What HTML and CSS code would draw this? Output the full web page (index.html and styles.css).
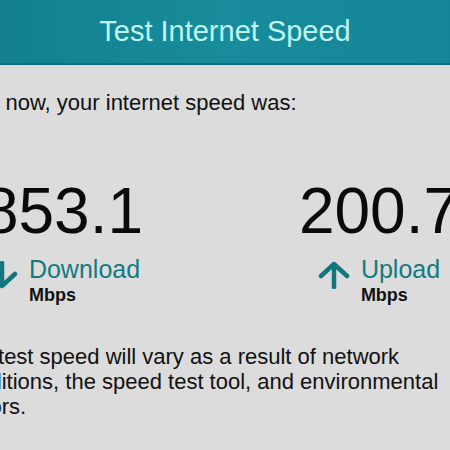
FILE: index.html
```html
<!DOCTYPE html>
<html lang="en">
<head>
    <meta charset="UTF-8">
    <meta name="viewport" content="width=device-width, initial-scale=1.0">
    <title>Test Internet Speed</title>
    <link rel="stylesheet" href="styles.css">
</head>
<body>
    <header class="topbar">
        <h1>Test Internet Speed</h1>
    </header>
    <main class="content">
        <p class="intro">Just now, your internet speed was:</p>

        <div class="results">
            <div class="result">
                <div class="value">853.1</div>
                <div class="meta">
                    <svg class="arrow" viewBox="0 0 32 28" width="32" height="28">
                        <path d="M16 2 V25 M3 13 L16 25 L29 13" />
                    </svg>
                    <div>
                        <div class="label">Download</div>
                        <div class="unit">Mbps</div>
                    </div>
                </div>
            </div>
            <div class="result">
                <div class="value">200.7</div>
                <div class="meta">
                    <svg class="arrow" viewBox="0 0 32 28" width="32" height="28">
                        <path d="M16 26 V3 M3 15 L16 3 L29 15" />
                    </svg>
                    <div>
                        <div class="label">Upload</div>
                        <div class="unit">Mbps</div>
                    </div>
                </div>
            </div>
        </div>

        <p class="note">The test speed will vary as a result of network conditions, the speed test tool, and environmental factors.</p>
    </main>
</body>
</html>
```

FILE: styles.css
```css
body {
    font-family: "Liberation Sans", Arial, sans-serif;
    margin: 0;
    padding: 0;
    background-color: #dcdcdc;
    color: #111;
    overflow: hidden;
}
.topbar {
    background: linear-gradient(to right, #137f8f, #178c9b 50%, #14869a);
    height: 63px;
    border-bottom: 2px solid #0f6f7c;
    display: flex;
    justify-content: center;
    align-items: center;
}
.topbar h1 {
    margin: 0;
    font-size: 29px;
    font-weight: normal;
    color: #bff5f2;
}
.content {
    margin-left: -41px;
}
.intro {
    margin: 24px 0 0;
    font-size: 22px;
    line-height: 28px;
}
.results {
    display: flex;
    margin-left: -54px;
    width: 632px;
    margin-top: 62px;
}
.result {
    flex: 1;
    display: flex;
    flex-direction: column;
    align-items: center;
}
.value {
    font-size: 64px;
    line-height: 64px;
    color: #0a0a0a;
}
.meta {
    display: flex;
    align-items: flex-start;
    gap: 11px;
    margin-top: 12px;
}
.arrow {
    margin-top: 6px;
    fill: none;
    stroke: #13767e;
    stroke-width: 4.5;
    stroke-linecap: round;
    stroke-linejoin: round;
}
.label {
    font-size: 25px;
    line-height: 28px;
    color: #137a82;
}
.unit {
    font-size: 18px;
    font-weight: bold;
    line-height: 22px;
    margin-top: 1px;
}
.note {
    margin: 38px 0 0 -5px;
    width: 500px;
    font-size: 22px;
    line-height: 25px;
}
```
